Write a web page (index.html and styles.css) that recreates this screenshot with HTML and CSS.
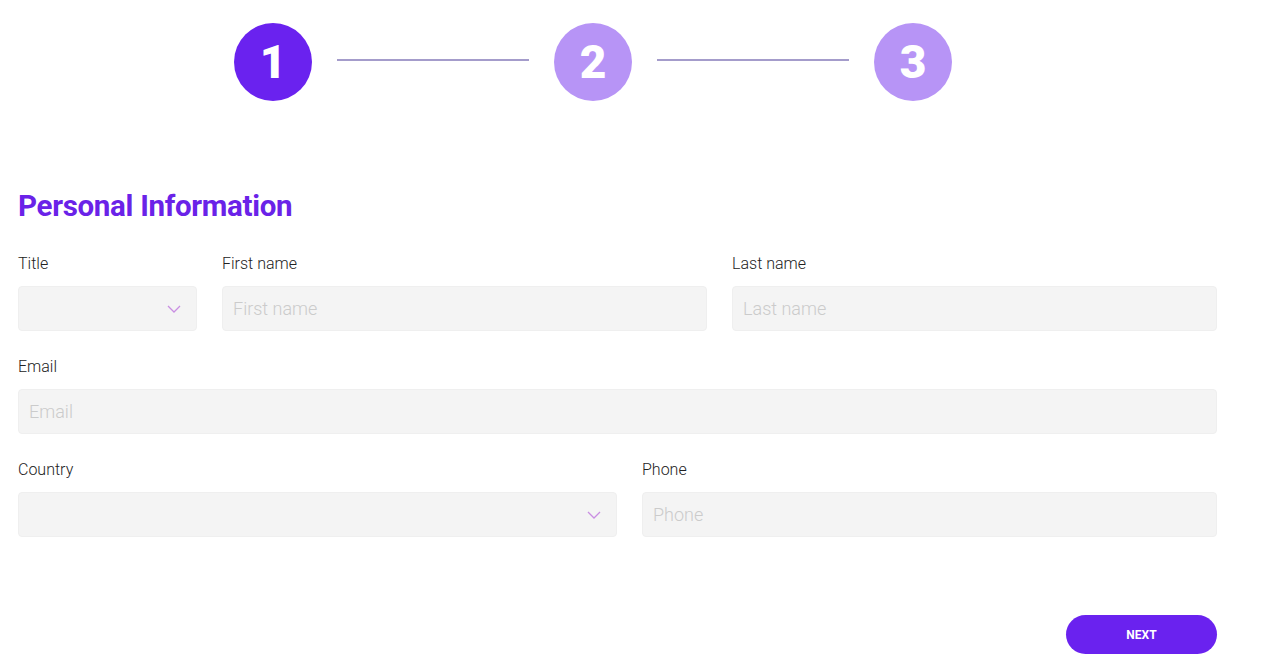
FILE: index.html
```html
<!DOCTYPE html>
<html>
<head>
<meta charset="utf-8">
<link rel="stylesheet" href="styles.css">
</head>
<body>
<div class="page">
  <div class="stepper">
    <div class="step active">1</div>
    <div class="line"></div>
    <div class="step">2</div>
    <div class="line"></div>
    <div class="step">3</div>
  </div>
  <h1 class="heading">Personal Information</h1>
  <form class="form">
    <div class="row row-1">
      <div class="field">
        <label class="label">Title</label>
        <div class="input select">
          <svg class="chev" width="14" height="8" viewBox="0 0 14 8"><path d="M1 1 L7 7 L13 1" fill="none" stroke="#c98ee2" stroke-width="1.3"/></svg>
        </div>
      </div>
      <div class="field">
        <label class="label">First name</label>
        <div class="input"><span class="ph">First name</span></div>
      </div>
      <div class="field">
        <label class="label">Last name</label>
        <div class="input"><span class="ph">Last name</span></div>
      </div>
    </div>
    <div class="row row-2">
      <div class="field">
        <label class="label">Email</label>
        <div class="input"><span class="ph">Email</span></div>
      </div>
    </div>
    <div class="row row-3">
      <div class="field">
        <label class="label">Country</label>
        <div class="input select">
          <svg class="chev" width="14" height="8" viewBox="0 0 14 8"><path d="M1 1 L7 7 L13 1" fill="none" stroke="#c98ee2" stroke-width="1.3"/></svg>
        </div>
      </div>
      <div class="field">
        <label class="label">Phone</label>
        <div class="input"><span class="ph">Phone</span></div>
      </div>
    </div>
    <div class="actions">
      <button type="button" class="next">NEXT</button>
    </div>
  </form>
</div>
</body>
</html>
```
FILE: styles.css
```css
* { box-sizing: border-box; }
html, body { margin: 0; padding: 0; background: #fff; }
body { font-family: Roboto, "Noto Sans", sans-serif; color: #333; }
.page { padding: 23px 0 0 18px; width: 1217px; }
.stepper { display: flex; align-items: center; padding-left: 216px; }
.step {
  width: 78px; height: 78px; border-radius: 50%;
  background: #b794f6; color: #fff;
  display: flex; align-items: center; justify-content: center;
  font-weight: 900; font-size: 46px; line-height: 1;
  flex: none;
}
.step.active { background: #6a22ef; }
.line { width: 192px; height: 2px; background: #a49ccb; margin: 0 25px; transform: translateY(-2px); flex: none; }
.heading {
  margin: 87px 0 0 0; font-size: 29.5px; font-weight: 700; color: #6a22e8;
  line-height: 36px; letter-spacing: -0.3px;
}
.form { margin-top: 30px; }
.row { display: grid; column-gap: 25px; margin-bottom: 26px; }
.row-1 { grid-template-columns: 179px 485px 485px; }
.row-2 { grid-template-columns: 1199px; }
.row-3 { grid-template-columns: 599px 575px; }
.field { display: flex; flex-direction: column; }
.label { font-size: 16px; font-weight: 300; line-height: 20px; color: #222; margin-bottom: 12px; }
.input {
  height: 45px; background: #f4f4f4; border-radius: 4px;
  border: 1px solid #efefef;
  display: flex; align-items: center; padding: 0 10px;
}
.select { justify-content: flex-end; padding-right: 15px; }
.ph { font-size: 18px; font-weight: 300; color: #cbcbcb; }
.actions { display: flex; justify-content: flex-end; margin-top: 78px; }
.next {
  width: 151px; height: 39px; border-radius: 20px; border: none;
  background: #6a22ef; color: #fff; font-family: Roboto, sans-serif;
  font-weight: 700; font-size: 12px;
}
```
